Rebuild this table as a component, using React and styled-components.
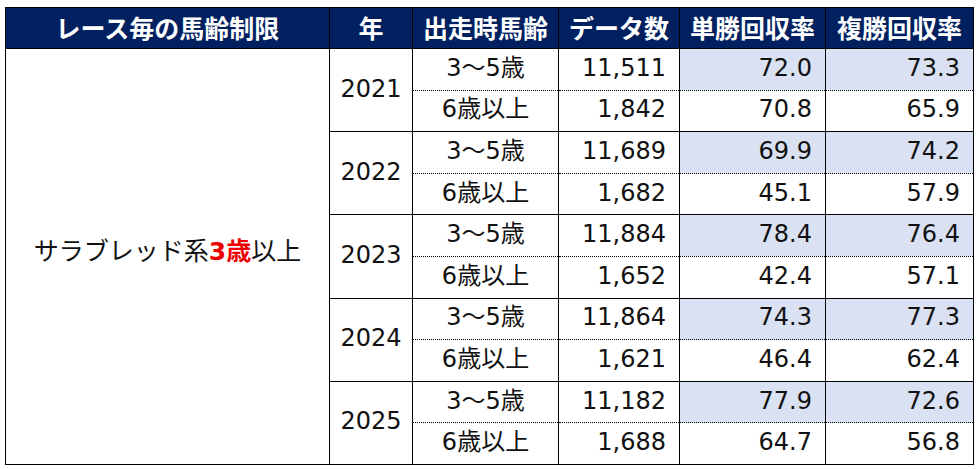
import React from 'react';
import styled, { createGlobalStyle } from 'styled-components';

const GlobalStyle = createGlobalStyle`
  html, body {
    margin: 0;
    padding: 0;
    background: #ffffff;
  }

  body {
    font-family: "DejaVu Sans", "Noto Sans CJK JP", sans-serif;
    color: #111;
  }
`;

const Page = styled.div`
  padding: 7px 0 0 5px;
`;

const Table = styled.table`
  border-collapse: collapse;
  table-layout: fixed;
  width: 968px;
  border: 1px solid #000;
  font-size: 24px;
`;

const HeadRow = styled.tr`
  height: 41px;
  background: #002060;
`;

const HeadCell = styled.th`
  border: 1px solid #000;
  color: #ffffff;
  font-family: "Noto Sans CJK JP", sans-serif;
  font-weight: 700;
  font-size: 25px;
  padding: 0 0 3px;
  text-align: center;
  white-space: nowrap;
  overflow: hidden;
`;

const Row = styled.tr`
  height: 41.6px;
`;

const Cell = styled.td`
  border-left: 1px solid #000;
  border-right: 1px solid #000;
  border-top: ${(p) => (p.$dotted ? '1px dotted #000' : '1px solid #000')};
  background: ${(p) => (p.$shade ? '#d9e1f2' : '#ffffff')};
  text-align: ${(p) => p.$align || 'center'};
  padding: ${(p) => (p.$align === 'right' ? '0 13px 3px 0' : '0 0 3px')};
  vertical-align: middle;
  white-space: nowrap;
  line-height: 1;
`;

const Category = styled(Cell)`
  font-size: 25px;
  padding: 0 0 10px;
`;

const Accent = styled.span`
  color: #ee0000;
  font-weight: 700;
`;

const years = [
  { year: '2021', rows: [['11,511', '72.0', '73.3'], ['1,842', '70.8', '65.9']] },
  { year: '2022', rows: [['11,689', '69.9', '74.2'], ['1,682', '45.1', '57.9']] },
  { year: '2023', rows: [['11,884', '78.4', '76.4'], ['1,652', '42.4', '57.1']] },
  { year: '2024', rows: [['11,864', '74.3', '77.3'], ['1,621', '46.4', '62.4']] },
  { year: '2025', rows: [['11,182', '77.9', '72.6'], ['1,688', '64.7', '56.8']] },
];

const ages = ['3〜5歳', '6歳以上'];

const App = () => (
  <>
    <GlobalStyle />
    <Page>
      <Table>
        <colgroup>
          <col style={{ width: 324 }} />
          <col style={{ width: 83 }} />
          <col style={{ width: 146 }} />
          <col style={{ width: 121 }} />
          <col style={{ width: 146 }} />
          <col style={{ width: 148 }} />
        </colgroup>
        <thead>
          <HeadRow>
            <HeadCell>レース毎の馬齢制限</HeadCell>
            <HeadCell>年</HeadCell>
            <HeadCell>出走時馬齢</HeadCell>
            <HeadCell>データ数</HeadCell>
            <HeadCell>単勝回収率</HeadCell>
            <HeadCell>複勝回収率</HeadCell>
          </HeadRow>
        </thead>
        <tbody>
          {years.map((group, gi) =>
            group.rows.map((r, ri) => {
              const shaded = ri === 0;
              const dotted = ri === 1;
              return (
                <Row key={group.year + ri}>
                  {gi === 0 && ri === 0 && (
                    <Category rowSpan={10}>
                      サラブレッド系<Accent>3歳</Accent>以上
                    </Category>
                  )}
                  {ri === 0 && <Cell rowSpan={2}>{group.year}</Cell>}
                  <Cell $dotted={dotted}>{ages[ri]}</Cell>
                  <Cell $dotted={dotted} $align="right">{r[0]}</Cell>
                  <Cell $dotted={dotted} $align="right" $shade={shaded}>{r[1]}</Cell>
                  <Cell $dotted={dotted} $align="right" $shade={shaded}>{r[2]}</Cell>
                </Row>
              );
            })
          )}
        </tbody>
      </Table>
    </Page>
  </>
);

export default App;
